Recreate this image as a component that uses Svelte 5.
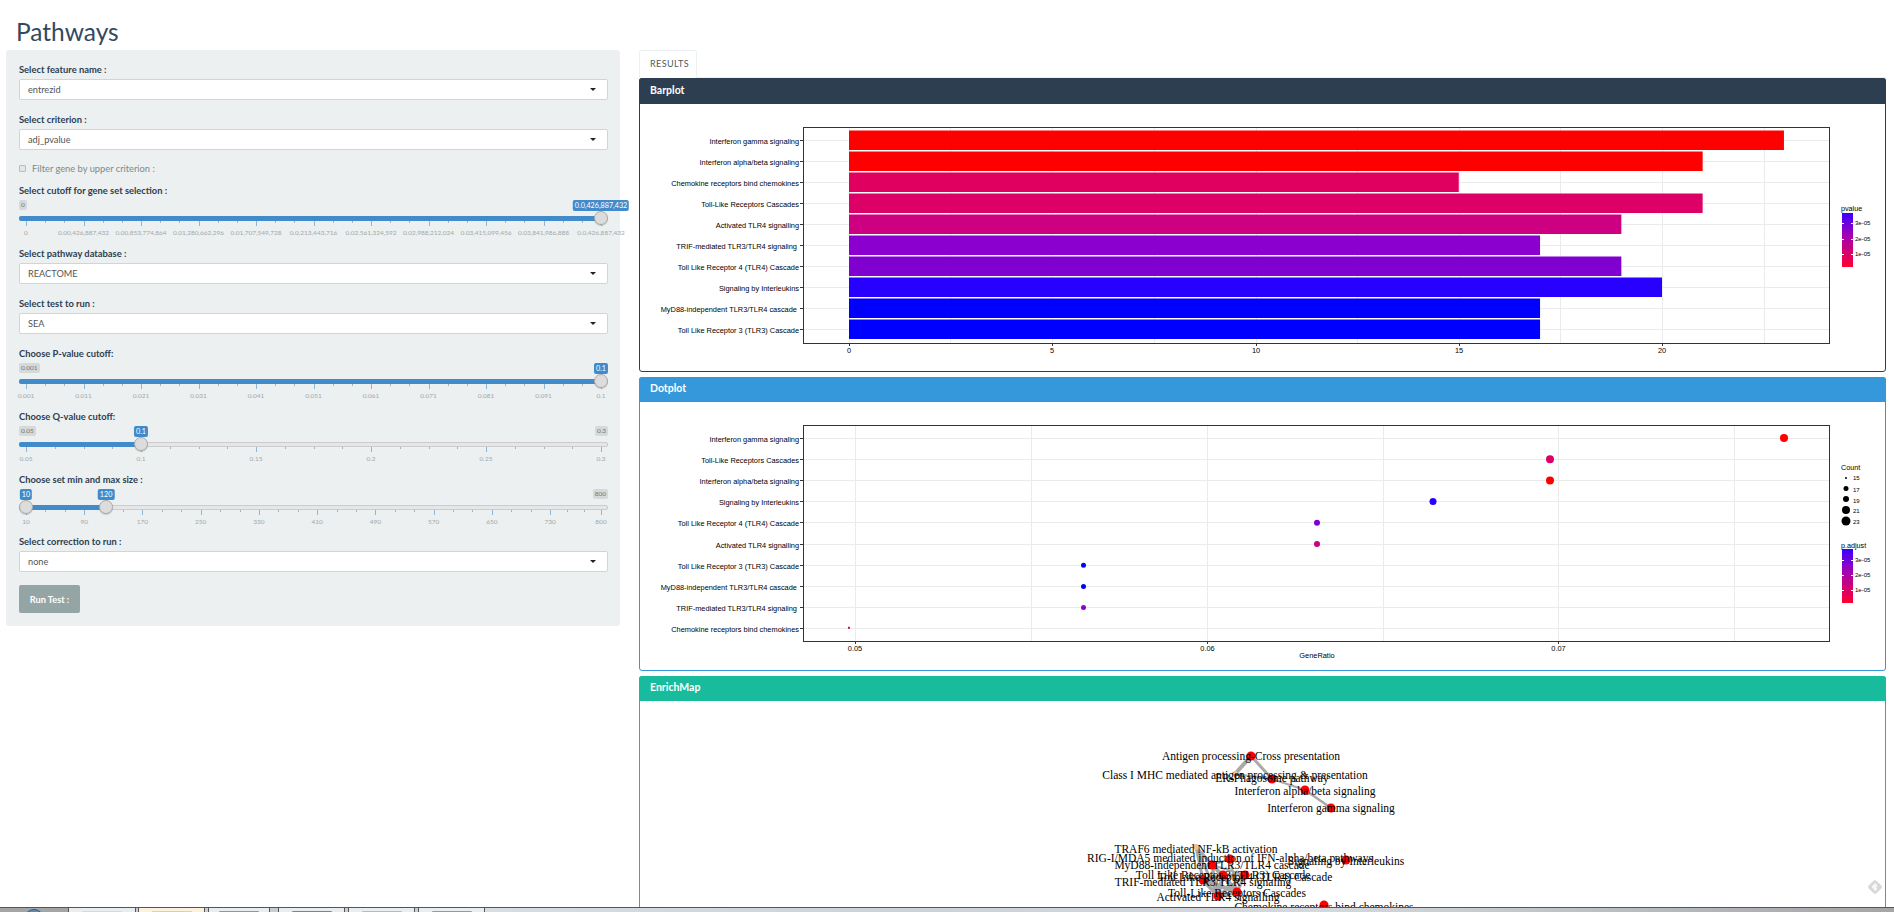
<script>
  const sliders = {
    cutoff: {
      min: '0', values: [{ t: '0.0,426,887,432', at: 1 }], fill: [0, 1],
      labels: ['0', '0.00,426,887,432', '0.00,853,774,864', '0.01,280,662,296', '0.01,707,549,728', '0.0,213,443,716', '0.02,561,324,592', '0.02,988,212,024', '0.03,415,099,456', '0.03,841,986,888', '0.0,426,887,432'],
      max: null, minor: 2
    },
    p: {
      min: '0.001', values: [{ t: '0.1', at: 1 }], fill: [0, 1],
      labels: ['0.001', '0.011', '0.021', '0.031', '0.041', '0.051', '0.061', '0.071', '0.081', '0.091', '0.1'],
      max: null, minor: 2
    },
    q: {
      min: '0.05', values: [{ t: '0.1', at: 0.2 }], fill: [0, 0.2],
      labels: ['0.05', '0.1', '0.15', '0.2', '0.25', '0.3'],
      max: '0.3', minor: 3
    },
    size: {
      min: null, values: [{ t: '10', at: 0 }, { t: '120', at: 110 / 790 }], fill: [0, 110 / 790],
      labels: ['10', '90', '170', '250', '330', '410', '490', '570', '650', '730', '800'],
      at: (i) => (i === 10 ? 1 : (i * 80) / 790),
      max: '800', minor: 2
    }
  };

  const pct = (f) => `calc(${7}px + (100% - 14px) * ${f})`;
  function ticksOf(s) {
    const n = s.labels.length - 1;
    const pos = s.at || ((i) => i / n);
    const out = [];
    for (let i = 0; i <= n; i++) {
      out.push({ f: pos(i), major: true });
      if (i < n) for (let k = 1; k <= s.minor; k++) out.push({ f: pos(i) + ((pos(i + 1) - pos(i)) * k) / (s.minor + 1), major: false });
    }
    return out;
  }

  const barRows = [
    ['Interferon gamma signaling', 23, '#ff0000'],
    ['Interferon alpha/beta signaling', 21, '#ff0000'],
    ['Chemokine receptors bind chemokines', 15, '#e0005f'],
    ['Toll-Like Receptors Cascades', 21, '#dd0066'],
    ['Activated TLR4 signalling', 19, '#cc0080'],
    ['TRIF-mediated TLR3/TLR4 signaling ', 17, '#8b00cf'],
    ['Toll Like Receptor 4 (TLR4) Cascade', 19, '#8000d0'],
    ['Signaling by Interleukins', 20, '#2800ff'],
    ['MyD88-independent TLR3/TLR4 cascade ', 17, '#0000ff'],
    ['Toll Like Receptor 3 (TLR3) Cascade', 17, '#0000ff']
  ];
  const barX = (v) => 849 + v * 40.65;
  const rowY = (i) => 140 + i * 21;

  const dotRows = [
    ['Interferon gamma signaling', 1784, 4, '#ff0000'],
    ['Toll-Like Receptors Cascades', 1550, 4, '#dd0066'],
    ['Interferon alpha/beta signaling', 1550, 4, '#ff0000'],
    ['Signaling by Interleukins', 1433, 3.5, '#2800ff'],
    ['Toll Like Receptor 4 (TLR4) Cascade', 1317, 3, '#8000d0'],
    ['Activated TLR4 signalling', 1317, 3, '#cc0080'],
    ['Toll Like Receptor 3 (TLR3) Cascade', 1083.5, 2.5, '#0000ff'],
    ['MyD88-independent TLR3/TLR4 cascade ', 1083.5, 2.5, '#0000ff'],
    ['TRIF-mediated TLR3/TLR4 signaling ', 1083.5, 2.5, '#8b00cf'],
    ['Chemokine receptors bind chemokines', 849, 1, '#e0005f']
  ];
  const dotY = (i) => 438 + i * 21.2;

  const nodes = {
    antigen: [1251, 755, 'Antigen processing-Cross presentation', 759, 1],
    classI: [1235, 773, 'Class I MHC mediated antigen processing & presentation', 778, 0],
    er: [1272, 778, 'ER-Phagosome pathway', 781, 1],
    alpha: [1305, 789, 'Interferon alpha/beta signaling', 794, 1],
    gamma: [1331, 807, 'Interferon gamma signaling', 811, 1],
    traf: [1196, 846, 'TRAF6 mediated NF-kB activation', 852, 0],
    rig: [1230, 858, 'RIG-I/MDA5 mediated induction of IFN-alpha/beta pathways', 861, 1],
    myd: [1212, 864, 'MyD88-independent TLR3/TLR4 cascade', 868, 1],
    il: [1346, 859, 'Signaling by Interleukins', 864, 1],
    tlr3: [1223, 874, 'Toll Like Receptor 3 (TLR3) Cascade', 878, 1],
    tlr4: [1245, 874, 'Toll Like Receptor 4 (TLR4) Cascade', 880, 1],
    trif: [1203, 879, 'TRIF-mediated TLR3/TLR4 signaling', 885, 1],
    toll: [1237, 891, 'Toll-Like Receptors Cascades', 896, 1],
    act: [1218, 895, 'Activated TLR4 signalling', 900, 1],
    chem: [1324, 904, 'Chemokine receptors bind chemokines', 910, 1]
  };
  const edges = [
    ['antigen', 'classI', 4], ['antigen', 'er', 3], ['classI', 'er', 2], ['er', 'alpha', 2], ['alpha', 'gamma', 2.5],
    ['traf', 'trif', 3], ['traf', 'toll', 3], ['traf', 'act', 3], ['traf', 'tlr3', 2], ['rig', 'myd', 2], ['rig', 'toll', 2],
    ['myd', 'tlr3', 3], ['myd', 'tlr4', 2], ['myd', 'toll', 3], ['myd', 'act', 3], ['tlr3', 'tlr4', 3], ['tlr3', 'toll', 4],
    ['tlr3', 'act', 4], ['tlr4', 'toll', 3], ['tlr4', 'act', 3], ['trif', 'toll', 4], ['trif', 'act', 4], ['toll', 'act', 4], ['trif', 'tlr3', 3]
  ];

  const dock = [
    { w: 68, gap: 0, cls: 'start' },
    { w: 68, gap: 0, icon: '#e6d9b8' },
    { w: 67, gap: 2, icon: '#f5c98a', cls: 'warm' },
    { w: 62, gap: 3, icon: '#7d94d6' },
    { w: 67, gap: 8, icon: '#e2603a' },
    { w: 67, gap: 3, icon: '#eeb54a' },
    { w: 67, gap: 3, icon: '#e8804a' }
  ];
</script>

{#snippet field(label, value)}
  <div class="group">
    <div class="label">{label}</div>
    <div class="select"><span>{value}</span><i class="caret"></i></div>
  </div>
{/snippet}

{#snippet slider(label, s, cls)}
  <div class="group slider-group {cls}">
    <div class="label">{label}</div>
    <div class="slider">
      {#if s.min}<span class="bound" style="left:0">{s.min}</span>{/if}
      {#if s.max}<span class="bound" style="right:0">{s.max}</span>{/if}
      <div class="track"></div>
      <div class="fill" style="left:{pct(s.fill[0])};width:calc((100% - 14px) * {s.fill[1] - s.fill[0]})"></div>
      {#if s.fill[0] === 0}<div class="fill start-cap"></div>{/if}
      {#each ticksOf(s) as t}
        <i class="tick" class:major={t.major} style="left:{pct(t.f)}"></i>
      {/each}
      {#each s.labels as l, i}
        <span class="tlabel" style="left:{pct(s.at ? s.at(i) : i / (s.labels.length - 1))}">{l}</span>
      {/each}
      {#each s.values as v}
        <span class="value" style="left:{pct(v.at)}">{v.t}</span>
        <span class="handle" style="left:{pct(v.at)}"></span>
      {/each}
    </div>
  </div>
{/snippet}

<div class="page">
  <h1>Pathways</h1>
  <div class="columns">
    <aside class="sidebar">
      {@render field('Select feature name :', 'entrezid')}
      {@render field('Select criterion :', 'adj_pvalue')}
      <label class="check"><i class="box"></i><span>Filter gene by upper criterion :</span></label>
      {@render slider('Select cutoff for gene set selection :', sliders.cutoff, 'first')}
      {@render field('Select pathway database :', 'REACTOME')}
      {@render field('Select test to run :', 'SEA')}
      {@render slider('Choose P-value cutoff:', sliders.p, '')}
      {@render slider('Choose Q-value cutoff:', sliders.q, '')}
      {@render slider('Choose set min and max size :', sliders.size, 'last')}
      {@render field('Select correction to run :', 'none')}
      <button class="run">Run Test :</button>
    </aside>

    <main class="results">
      <div class="tabs"><span class="tab">RESULTS</span></div>

      <section class="panel dark">
        <header>Barplot</header>
        <svg class="plot bar" viewBox="640 104 1245 267">
          <defs>
            <linearGradient id="g1" x1="0" y1="0" x2="0" y2="1">
              <stop offset="0" stop-color="#3a00ff" /><stop offset="0.4" stop-color="#a000b8" /><stop offset="1" stop-color="#ff0030" />
            </linearGradient>
          </defs>
          {#each [950.5, 1154, 1357.5, 1560.5, 1764] as x}<line class="grid" x1={x} x2={x} y1="127" y2="343" />{/each}
          {#each [849, 1052, 1256, 1459, 1662] as x}<line class="grid" x1={x} x2={x} y1="127" y2="343" />{/each}
          {#each barRows as r, i}<line class="grid" x1="803" x2="1830" y1={rowY(i)} y2={rowY(i)} />{/each}
          {#each barRows as r, i}
            <rect x="849" y={rowY(i) - 9.5} width={barX(r[1]) - 849} height="19.5" fill={r[2]} />
            <text class="axis" x="799" y={rowY(i) + 3.5} text-anchor="end">{r[0]}</text>
            <line class="tk" x1="800" x2="803" y1={rowY(i)} y2={rowY(i)} />
          {/each}
          <rect class="frame" x="803.5" y="127.5" width="1026" height="216" />
          {#each [[0, 849], [5, 1052], [10, 1256], [15, 1459], [20, 1662]] as t}
            <line class="tk" x1={t[1]} x2={t[1]} y1="344" y2="346" />
            <text class="axis" x={t[1]} y="353" text-anchor="middle">{t[0]}</text>
          {/each}
          <text class="legend-title" x="1841" y="211">pvalue</text>
          <rect x="1842" y="213" width="11" height="54" fill="url(#g1)" />
          {#each [[224, '3e-05'], [240, '2e-05'], [255, '1e-05']] as t}
            <line class="wt" x1="1842" x2="1844" y1={t[0] - 1} y2={t[0] - 1} />
            <line class="wt" x1="1851" x2="1853" y1={t[0] - 1} y2={t[0] - 1} />
            <text class="legend" x="1855" y={t[0] + 1}>{t[1]}</text>
          {/each}
        </svg>
      </section>

      <section class="panel blue">
        <header>Dotplot</header>
        <svg class="plot dot" viewBox="640 402 1245 268">
          <defs>
            <linearGradient id="g2" x1="0" y1="0" x2="0" y2="1">
              <stop offset="0" stop-color="#3a00ff" /><stop offset="0.4" stop-color="#a000b8" /><stop offset="1" stop-color="#ff0030" />
            </linearGradient>
          </defs>
          {#each [855, 1031, 1207.5, 1383, 1558.5, 1734] as x}<line class="grid" x1={x} x2={x} y1="425" y2="641" />{/each}
          {#each dotRows as r, i}<line class="grid" x1="803" x2="1830" y1={dotY(i)} y2={dotY(i)} />{/each}
          {#each dotRows as r, i}
            {#if r[2] < 2}
              <rect x={r[1] - 1} y={dotY(i) - 2} width="2" height="2" fill={r[3]} />
            {:else}
              <circle cx={r[1]} cy={dotY(i)} r={r[2]} fill={r[3]} />
            {/if}
            <text class="axis" x="799" y={dotY(i) + 3.5} text-anchor="end">{r[0]}</text>
            <line class="tk" x1="800" x2="803" y1={dotY(i)} y2={dotY(i)} />
          {/each}
          <rect class="frame" x="803.5" y="425.5" width="1026" height="216" />
          {#each [['0.05', 855], ['0.06', 1207.5], ['0.07', 1558.5]] as t}
            <line class="tk" x1={t[1]} x2={t[1]} y1="642" y2="644" />
            <text class="axis" x={t[1]} y="651" text-anchor="middle">{t[0]}</text>
          {/each}
          <text class="axis" x="1317" y="658" text-anchor="middle">GeneRatio</text>
          <text class="legend-title" x="1841" y="470">Count</text>
          {#each [[478, 1, '15', 480], [488.5, 2.5, '17', 492], [499, 3, '19', 503], [510, 4, '21', 513], [521, 4.5, '23', 524]] as c}
            <circle cx="1846" cy={c[0]} r={c[1]} fill="#000" />
            <text class="legend" x="1853" y={c[3]}>{c[2]}</text>
          {/each}
          <text class="legend-title" x="1841" y="548">p.adjust</text>
          <rect x="1842" y="549" width="11" height="54" fill="url(#g2)" />
          {#each [[561, '3e-05'], [576, '2e-05'], [591, '1e-05']] as t}
            <line class="wt" x1="1842" x2="1844" y1={t[0] - 1} y2={t[0] - 1} />
            <line class="wt" x1="1851" x2="1853" y1={t[0] - 1} y2={t[0] - 1} />
            <text class="legend" x="1855" y={t[0] + 1}>{t[1]}</text>
          {/each}
        </svg>
      </section>

      <section class="panel green">
        <header>EnrichMap</header>
        <svg class="plot map" viewBox="640 700 1245 240">
          {#each edges as e}
            <line class="edge" x1={nodes[e[0]][0]} y1={nodes[e[0]][1]} x2={nodes[e[1]][0]} y2={nodes[e[1]][1]} stroke-width={e[2]} />
          {/each}
          {#each Object.values(nodes) as n}
            <circle cx={n[0]} cy={n[1]} r={n[4] ? 4.5 : 3} fill={n[4] ? '#ff0000' : '#eec39a'} />
          {/each}
          {#each Object.values(nodes) as n}
            <text class="node" x={n[0]} y={n[3]} text-anchor="middle">{n[2]}</text>
          {/each}
        </svg>
      </section>
    </main>
  </div>

  <svg class="feedback" viewBox="0 0 18 18" width="18" height="18">
    <rect x="3.5" y="3.5" width="11" height="11" rx="2" transform="rotate(45 9 9)" fill="#d8d8d8" />
    <path d="M6.6 9 L9.6 6 M8 10.4 L10.6 7.8 M9 12 L10.2 10.8" stroke="#fff" stroke-width="1.6" stroke-linecap="round" />
  </svg>

  <div class="dock">
    {#each dock as d}
      <span class="dock-item {d.cls || ''}" style="width:{d.w}px;margin-left:{d.gap}px">
        {#if d.cls === 'start'}<i class="orb"></i>{:else}<i class="dock-icon" style="background:{d.icon}"></i>{/if}
      </span>
    {/each}
    <span class="dock-rest"></span>
  </div>
</div>

<style>
  :global(body) { margin: 0; background: #fff; }
  .page { position: relative; width: 1894px; height: 912px; overflow: hidden; font-family: Lato, "Open Sans", sans-serif; color: #2c3e50; }
  h1 { margin: 0; height: 50px; padding-left: 16px; box-sizing: border-box; font-size: 24.5px; font-weight: 400; line-height: 64px; color: #34495e; }
  .columns { display: flex; align-items: flex-start; }

  .sidebar { margin-left: 6px; width: 614px; box-sizing: border-box; padding: 14px 12px 13px 13px; background: #ecf0f1; border-radius: 3px; }
  .group { margin-bottom: 14px; }
  .label { font-size: 9.35px; font-weight: 700; line-height: 12px; margin-bottom: 3px; color: #2c3e50; white-space: nowrap; }
  .select { height: 21px; box-sizing: border-box; border: 1px solid #d0d5d8; border-radius: 2px; background: #fff; display: flex; align-items: center; justify-content: space-between; padding: 0 11px 0 8px; font-size: 9.2px; color: #555; }
  .caret { width: 0; height: 0; border: 3px solid transparent; border-top: 3px solid #222; border-bottom: 0; }
  .check { display: flex; align-items: center; gap: 6px; height: 12px; margin: -2px 0 11px; font-size: 9.3px; color: #7b8a8b; }
  .box { width: 7px; height: 7px; box-sizing: border-box; border: 1px solid #bbb; background: #e4e6e7; border-radius: 1px; }

  .slider-group { margin-bottom: 10px; }
  .slider-group.last { margin-bottom: 9px; }
  .slider { position: relative; height: 38px; }
  .bound { position: absolute; top: 0; height: 10px; padding: 0 2px; background: #d6d9da; border-radius: 2px; font-size: 6.5px; line-height: 10px; color: #777; }
  .track { position: absolute; left: 0; right: 0; top: 16px; height: 5px; box-sizing: border-box; background: #e4e6e7; border: 1px solid #ccc; border-radius: 2px; }
  .fill { position: absolute; top: 16px; height: 5px; background: #428bca; }
  .start-cap { left: 0; width: 8px; border-radius: 2px 0 0 2px; }
  .tick { position: absolute; top: 21px; width: 1px; height: 2px; background: #aab3b8; }
  .tick.major { height: 5px; background: #8fb6d6; }
  .tlabel { position: absolute; top: 29px; transform: translateX(-50%); font-size: 6.5px; line-height: 8px; color: #a2a8aa; white-space: nowrap; }
  .value { position: absolute; top: 0; transform: translateX(-50%); height: 11px; padding: 0 2px; background: #428bca; border-radius: 2px; color: #fff; font-size: 7.2px; line-height: 11px; white-space: nowrap; }
  .handle { position: absolute; top: 11px; margin-left: -7px; width: 14px; height: 14px; box-sizing: border-box; border-radius: 50%; background: #dcdcdc; border: 1px solid #aaa; box-shadow: 0 1px 1px rgba(0,0,0,.15); }
  .run { display: block; margin-top: -1px; width: 61px; height: 28px; border: 0; border-radius: 2px; background: #95a5a6; color: #fff; font: 700 9.2px Lato, sans-serif; padding: 0; }

  .results { margin-left: 19px; width: 1247px; }
  .tabs { height: 28px; box-sizing: border-box; border-bottom: 1px solid #ecf0f1; }
  .tab { display: block; width: 58px; height: 28px; box-sizing: border-box; border: 1px solid #ecf0f1; border-bottom-color: #fff; border-radius: 3px 3px 0 0; padding-left: 10px; background: #fff; font-size: 9px; letter-spacing: .4px; line-height: 26px; color: #4a5a66; }

  .panel { border: 1px solid; border-radius: 3px; margin-bottom: 5px; background: #fff; }
  .panel header { height: 25px; margin: -1px -1px 0; padding-left: 11px; color: #fff; font-size: 10.5px; font-weight: 700; line-height: 23px; border-radius: 3px 3px 0 0; }
  .dark { border-color: #2c3e50; }
  .dark header { background: #2c3e50; height: 26px; line-height: 24px; }
  .blue { border-color: #3498db; }
  .blue header { background: #3498db; }
  .green { border-color: #18bc9c; height: 400px; }
  .green header { background: #18bc9c; }

  .plot { display: block; width: 1245px; }
  .plot.bar { height: 267px; }
  .plot.dot { height: 268px; }
  .plot.map { height: 240px; }
  .grid { stroke: #ebebeb; stroke-width: 1; shape-rendering: crispEdges; }
  .tk { stroke: #333; stroke-width: 1; shape-rendering: crispEdges; }
  .wt { stroke: #fff; stroke-width: 1; shape-rendering: crispEdges; }
  .frame { fill: none; stroke: #333; stroke-width: 1; shape-rendering: crispEdges; }
  .axis { font: 7.4px "Liberation Sans", Arial, sans-serif; fill: #000; white-space: pre; }
  .legend-title { font: 7.2px "Liberation Sans", Arial, sans-serif; fill: #000; }
  .legend { font: 6px "Liberation Sans", Arial, sans-serif; fill: #000; }
  .edge { stroke: #a9a9a9; }
  .node { font: 11.5px "Liberation Serif", "Times New Roman", serif; fill: #000; }

  .feedback { position: absolute; left: 1866px; top: 878px; }

  .dock { position: absolute; left: 0; right: 0; bottom: 0; height: 4px; display: flex; border-top: 1px solid #555; background: #c8cdd2; overflow: hidden; }
  .dock-item { display: flex; justify-content: center; background: #e9edf0; border-left: 1px solid #555; border-right: 1px solid #555; box-sizing: border-box; }
  .dock-item.start { background: #a3a5a7; border: 0; }
  .dock-item.warm { background: #fbf1dd; }
  .orb { width: 20px; height: 20px; margin-top: 1px; border: 1px solid #1f5e9e; border-radius: 50%; background: #6d8aa0; box-sizing: border-box; }
  .dock-icon { width: 40px; height: 8px; margin-top: 3px; border-radius: 1px; }
  .dock-rest { flex: 1; background: linear-gradient(90deg, #d8dde1 0%, #cdd2d6 30%, #d4d8dc 60%, #a3a5a7 100%); }
</style>
